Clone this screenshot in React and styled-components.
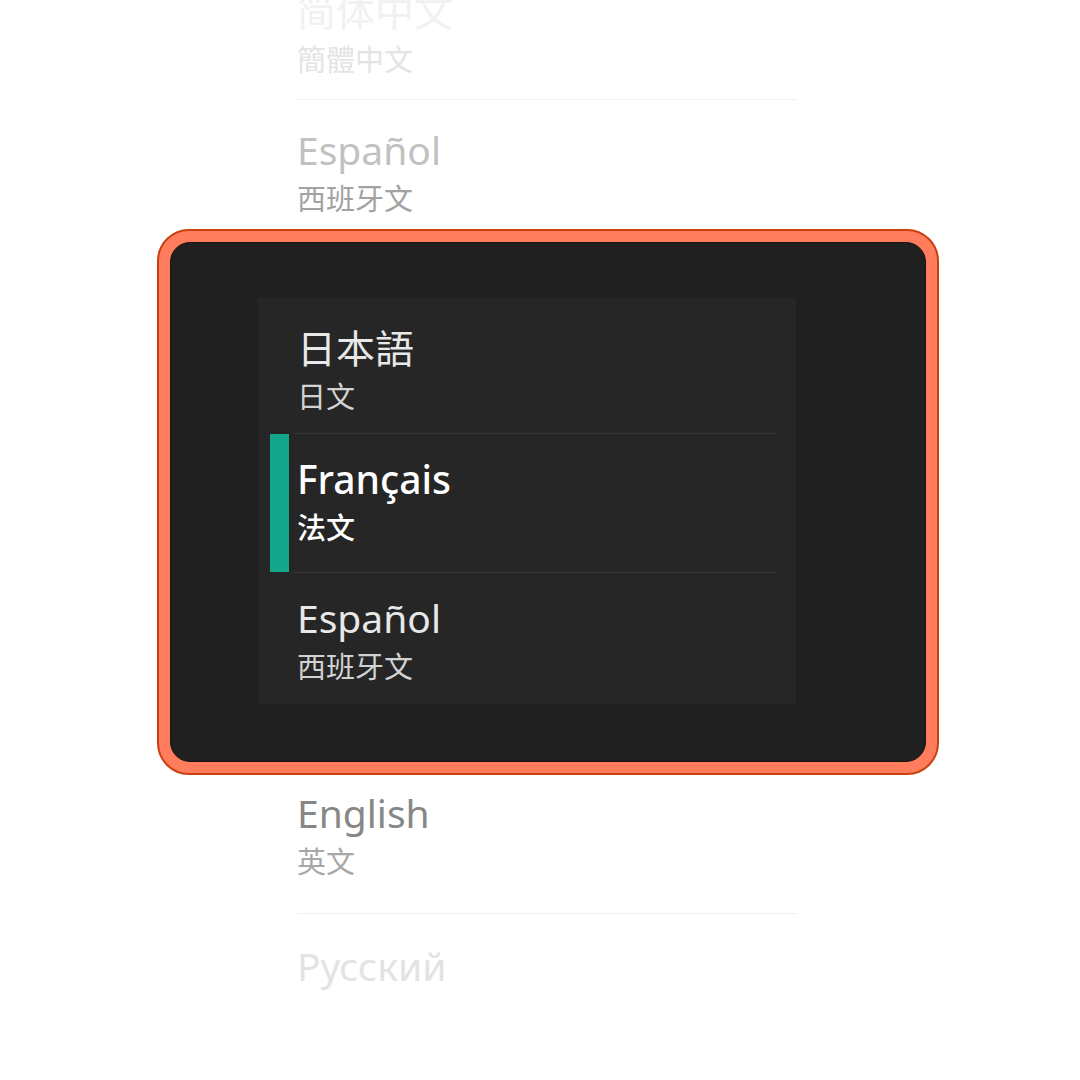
import React from 'react'
import styled, { createGlobalStyle } from 'styled-components';

const GlobalStyle = createGlobalStyle`
    html, body {
        margin: 0;
        padding: 0;
        background: #fff;
    }
    body {
        font-family: 'Noto Sans', 'Noto Sans CJK SC', sans-serif;
    }
`

const above = [
    { title: '简体中文', sub: '簡體中文', tone: '#f1f1f1', subTone: '#e4e4e4' },
    { title: 'Español', sub: '西班牙文', tone: '#c1c1c1', subTone: '#a2a2a2' },
]

const onScreen = [
    { title: '日本語', sub: '日文' },
    { title: 'Français', sub: '法文', active: true },
    { title: 'Español', sub: '西班牙文' },
]

const below = [
    { title: 'English', sub: '英文', tone: '#878787', subTone: '#a8a8a8', pad: 18 },
    { title: 'Русский', tone: '#e3e3e3', pad: 32 },
]

export default function App() {
    return (
        <Page>
            <GlobalStyle />
            <TopList>
                {above.map(item => (
                    <FadedRow key={item.sub}>
                        <Title color={item.tone}>{item.title}</Title>
                        <Sub color={item.subTone}>{item.sub}</Sub>
                    </FadedRow>
                ))}
            </TopList>

            <Device>
                <Screen>
                    <Panel>
                        {onScreen.map(item => (
                            <ScreenRow key={item.sub}>
                                <Marker active={item.active} />
                                <RowBody>
                                    <Title color="#e8e8e8" active={item.active}>{item.title}</Title>
                                    <Sub color="#d2d2d2" active={item.active}>{item.sub}</Sub>
                                </RowBody>
                            </ScreenRow>
                        ))}
                    </Panel>
                </Screen>
            </Device>

            <BottomList>
                {below.map(item => (
                    <FadedRow key={item.title} pad={item.pad}>
                        <Title color={item.tone}>{item.title}</Title>
                        {item.sub && <Sub color={item.subTone}>{item.sub}</Sub>}
                    </FadedRow>
                ))}
            </BottomList>
        </Page>
    )
}

const Page = styled.div`
    width: 1080px;
    height: 1080px;
    overflow: hidden;
    background: #fff;
`

const TopList = styled.div`
    margin-top: -39px;
    margin-left: 297px;
    width: 500px;
    height: 268px;
    overflow: hidden;
`

const BottomList = styled.div`
    margin-left: 297px;
    width: 500px;
`

const FadedRow = styled.div`
    box-sizing: border-box;
    height: 139px;
    padding-top: ${p => p.pad ?? 30}px;
    border-bottom: 1px solid #f1f1f1;
    display: flex;
    flex-direction: column;
    gap: 14px;
    ${BottomList} &:last-child {
        border-bottom-color: transparent;
    }
`

const Title = styled.div`
    font-size: 39px;
    line-height: 40px;
    white-space: nowrap;
    color: ${p => p.active ? '#ffffff' : p.color};
    font-weight: ${p => p.active ? 500 : 400};
`

const Sub = styled.div`
    font-size: 29px;
    line-height: 1;
    white-space: nowrap;
    color: ${p => p.active ? '#ffffff' : p.color};
    font-weight: ${p => p.active ? 500 : 400};
`

const Device = styled.div`
    box-sizing: border-box;
    width: 782px;
    height: 546px;
    margin-left: 157px;
    padding: 11px;
    background: #ff7d5c;
    border: 2px solid #c8410f;
    border-radius: 32px;
`

const Screen = styled.div`
    box-sizing: border-box;
    height: 100%;
    padding: 55px 0 0 87px;
    background: #202020;
    border: 1px solid #161616;
    border-radius: 20px;
`

const Panel = styled.div`
    width: 538px;
    height: 406px;
    overflow: hidden;
    background: #262626;
`

const ScreenRow = styled.div`
    box-sizing: border-box;
    height: 139px;
    padding-left: 12px;
    display: flex;
    &:first-child {
        height: 136px;
    }
`

const Marker = styled.div`
    width: 19px;
    flex-shrink: 0;
    margin-bottom: 1px;
    background: ${p => p.active ? '#12a78a' : 'transparent'};
`

const RowBody = styled.div`
    flex: 1;
    box-sizing: border-box;
    margin: 0 19px 0 4px;
    padding: 25px 0 0 4px;
    border-bottom: 1px solid #3a3333;
    display: flex;
    flex-direction: column;
    gap: 14px;
    ${ScreenRow}:first-child & {
        padding-top: 30px;
    }
`
